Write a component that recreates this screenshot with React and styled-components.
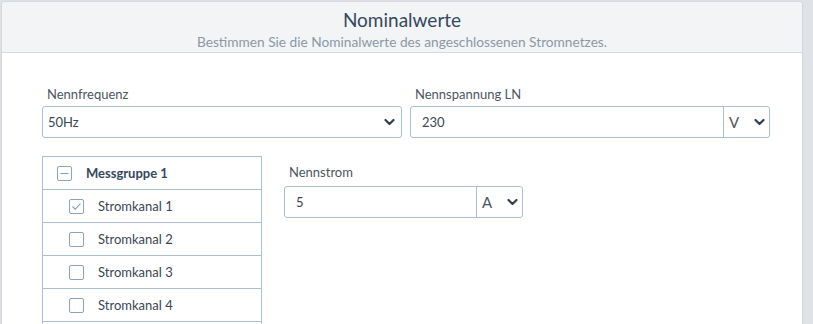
import styled, { createGlobalStyle } from "styled-components"

const GlobalStyle = createGlobalStyle`
  html, body {
    margin: 0;
    padding: 0;
    background: #dfe3e7;
    font-family: Lato, "Open Sans", sans-serif;
    overflow: hidden;
  }
`;

function Chevron() {
  return (
    <svg width="11" height="8" viewBox="0 0 11 8">
      <path d="M1.5 2 L5.5 6 L9.5 2" fill="none" stroke="#2f3f52" strokeWidth="2.2" strokeLinecap="round" strokeLinejoin="round" />
    </svg>
  )
}

function UnitInput({ value, unit, width }) {
  return (
    <Field $width={width} $pl={11} $pr={0}>
      <Value>{value}</Value>
      <Unit>
        <span>{unit}</span>
        <Chevron />
      </Unit>
    </Field>
  )
}

const channels = [
  { name: "Stromkanal 1", checked: true },
  { name: "Stromkanal 2", checked: false },
  { name: "Stromkanal 3", checked: false },
  { name: "Stromkanal 4", checked: false },
];

export default function App() {
  return (
    <>
      <GlobalStyle />
      <Card>
        <Header>
          <h1>Nominalwerte</h1>
          <p>Bestimmen Sie die Nominalwerte des angeschlossenen Stromnetzes.</p>
        </Header>
        <Body>
          <TopRow>
            <Group>
              <Label>Nennfrequenz</Label>
              <Field $width={360} $pl={5} $pr={6}>
                <Value>50Hz</Value>
                <Chevron />
              </Field>
            </Group>
            <Group>
              <Label>Nennspannung LN</Label>
              <UnitInput value="230" unit="V" width={360} />
            </Group>
          </TopRow>
          <BottomRow>
            <Tree>
              <GroupRow>
                <Box>
                  <svg width="15" height="15" viewBox="0 0 15 15">
                    <path d="M3.5 7.5 H11.5" stroke="#7f9aba" strokeWidth="1.2" />
                  </svg>
                </Box>
                <b>Messgruppe 1</b>
              </GroupRow>
              {channels.map((c) => (
                <ChannelRow key={c.name}>
                  <Box>
                    {c.checked && (
                      <svg width="15" height="15" viewBox="0 0 15 15">
                        <path d="M3.5 7.5 L6.3 10.2 L11.5 4.5" fill="none" stroke="#7f9aba" strokeWidth="1.1" />
                      </svg>
                    )}
                  </Box>
                  <span>{c.name}</span>
                </ChannelRow>
              ))}
            </Tree>
            <Group $pt={8}>
              <Label $mb={6}>Nennstrom</Label>
              <UnitInput value="5" unit="A" width={239} />
            </Group>
          </BottomRow>
        </Body>
      </Card>
    </>
  )
}

const Card = styled.div`
  margin: 2px 11px 0 2px;
  height: 330px;
  background: #fff;
  border-radius: 3px 3px 0 0;
  box-shadow: 0 0 2px rgba(0, 0, 0, 0.18);
  overflow: hidden;
`;

const Header = styled.div`
  background: #f2f4f6;
  border-bottom: 1px solid #d6dade;
  height: 51px;
  box-sizing: border-box;
  text-align: center;
  padding-top: 7px;

  h1 {
    margin: 0;
    font-size: 19px;
    font-weight: 400;
    color: #34495e;
    line-height: 22px;
  }

  p {
    margin: 3px 0 0;
    font-size: 13.7px;
    color: #8b99a6;
    line-height: 15px;
  }
`;

const Body = styled.div`
  padding: 33px 0 0 40px;
`;

const TopRow = styled.div`
  display: flex;
  gap: 8px;
`;

const BottomRow = styled.div`
  display: flex;
  gap: 22px;
  margin-top: 18px;
  align-items: flex-start;
`;

const Group = styled.div`
  display: flex;
  flex-direction: column;
  padding-top: ${(p) => p.$pt || 0}px;
`;

const Label = styled.label`
  font-size: 13px;
  color: #4d5660;
  padding-left: 5px;
  line-height: 16px;
  margin-bottom: ${(p) => p.$mb || 4}px;
`;

const Field = styled.div`
  width: ${(p) => p.$width}px;
  height: 32px;
  box-sizing: border-box;
  border: 1px solid #a9bfd6;
  border-radius: 3px;
  display: flex;
  align-items: center;
  padding-left: ${(p) => p.$pl}px;
  padding-right: ${(p) => p.$pr}px;
  font-size: 13px;
  color: #3a4654;
`;

const Value = styled.span`
  flex: 1;
`;

const Unit = styled.div`
  width: 46px;
  box-sizing: border-box;
  align-self: stretch;
  border-left: 1px solid #a9bfd6;
  display: flex;
  align-items: center;
  justify-content: space-between;
  padding: 0 4px 0 5px;
  font-size: 15px;
  color: #4d5660;
`;

const Tree = styled.div`
  width: 220px;
  min-height: 200px;
  box-sizing: border-box;
  border: 1px solid #a9bfd6;
  flex-shrink: 0;
`;

const Row = styled.div`
  height: 33px;
  box-sizing: border-box;
  display: flex;
  align-items: center;
  gap: 14px;
  font-size: 13px;
  color: #3a4654;
  border-bottom: 1px solid #a9bfd6;
`;

const GroupRow = styled(Row)`
  padding-left: 14px;
  b {
    font-weight: 700;
    color: #34495e;
  }
`;

const ChannelRow = styled(Row)`
  padding-left: 26px;
`;

const Box = styled.div`
  width: 15px;
  height: 15px;
  box-sizing: border-box;
  border: 1px solid #8aa4c3;
  border-radius: 2px;
  display: flex;
  align-items: center;
  justify-content: center;
  svg {
    margin: -1px;
  }
`;
